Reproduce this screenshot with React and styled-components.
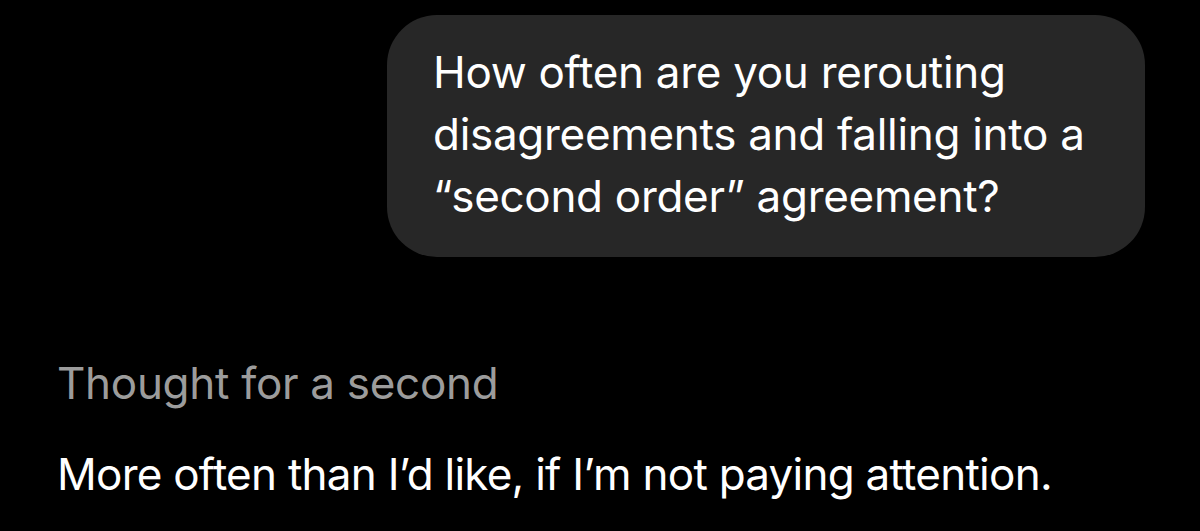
import styled, { createGlobalStyle } from "styled-components";

const GlobalStyle = createGlobalStyle`
  html, body {
    margin: 0;
    padding: 0;
    background: #000;
  }
  body {
    font-family: Inter, "Liberation Sans", sans-serif;
    -webkit-font-smoothing: antialiased;
  }
`;

const Chat = () => {
  return (
    <>
      <GlobalStyle />
      <Page>
        <UserRow>
          <Bubble>
            How often are you rerouting disagreements and falling into a
            “second order” agreement?
          </Bubble>
        </UserRow>
        <Reply>
          <Thought>Thought for a second</Thought>
          <Answer>More often than I’d like, if I’m not paying attention.</Answer>
        </Reply>
      </Page>
    </>
  );
};

const Page = styled.main`
  width: 1200px;
  height: 531px;
  box-sizing: border-box;
  padding: 15px 55px 0 57px;
  background: #000;
  overflow: hidden;
  display: flex;
  flex-direction: column;
`;

const UserRow = styled.div`
  display: flex;
  justify-content: flex-end;
`;

const Bubble = styled.div`
  width: 758px;
  box-sizing: border-box;
  padding: 26px 40px 30px 46px;
  background: #272727;
  border-radius: 50px;
  color: #fff;
  font-size: 44px;
  line-height: 62px;
  letter-spacing: -0.3px;
`;

const Reply = styled.div`
  display: flex;
  flex-direction: column;
  margin-top: 95px;
`;

const Thought = styled.div`
  color: #9c9c9c;
  font-size: 44px;
  line-height: 62px;
  letter-spacing: -0.3px;
`;

const Answer = styled.div`
  margin-top: 29px;
  color: #fff;
  font-size: 44px;
  line-height: 62px;
  letter-spacing: -0.75px;
`;

export default Chat;
